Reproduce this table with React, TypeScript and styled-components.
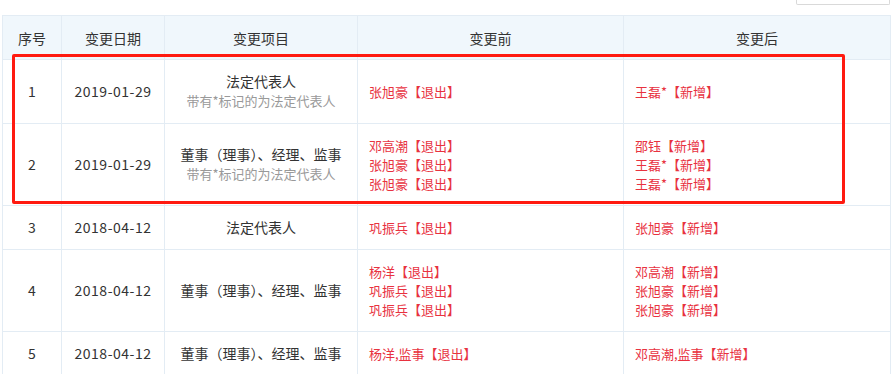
import React from "react";
import styled, { createGlobalStyle } from "styled-components";

const GlobalStyle = createGlobalStyle`
  html, body { margin: 0; padding: 0; background: #ffffff; }
  body { font-family: "Noto Sans CJK SC", "Noto Sans", sans-serif; color: #333333; }
`;

const Page = styled.div`
  width: 894px;
  height: 374px;
  overflow: hidden;
  padding-left: 2px;
  box-sizing: border-box;
`;

const Toolbar = styled.div`
  height: 15px;
  display: flex;
  justify-content: flex-end;
  align-items: flex-start;
  padding-right: 2px;
  width: 888px;
  box-sizing: border-box;
`;

const ToolButton = styled.div`
  width: 94px;
  height: 5px;
  box-sizing: border-box;
  border: 1px solid #d9d9d9;
  border-top: none;
  border-radius: 0 0 2px 2px;
  margin-right: -2px;
`;

const TableWrap = styled.div`
  position: relative;
  width: 888px;
`;

const Table = styled.table`
  width: 888px;
  border-collapse: collapse;
  table-layout: fixed;
  font-size: 14px;
`;

const HeadCell = styled.th`
  height: 43px;
  padding: 0;
  background: #f0f7fc;
  border: 1px solid #e3ecf4;
  font-weight: normal;
  color: #333;
  text-align: center;
  font-size: 14px;
  line-height: 20px;
`;

const Cell = styled.td<{ $align?: "left" | "center"; $spaced?: boolean }>`
  padding: 12px 10px 12px ${(p) => (p.$align === "left" ? "11px" : "10px")};
  border: 1px solid #e3ecf4;
  text-align: ${(p) => p.$align ?? "center"};
  vertical-align: middle;
  line-height: 19px;
  color: #333;
  white-space: nowrap;
  letter-spacing: ${(p) => (p.$spaced ? "0.5px" : "normal")};
`;

const Note = styled.div`
  font-size: 13px;
  color: #999999;
  line-height: 20px;
`;

const Change = styled.div`
  font-size: 13px;
  color: #e8323f;
  line-height: 19px;
`;

const Highlight = styled.div`
  position: absolute;
  left: 10px;
  top: 39px;
  width: 833px;
  height: 150px;
  border: 3px solid #ff1a10;
  border-radius: 2px;
  box-sizing: border-box;
  pointer-events: none;
`;

type Row = {
  no: number;
  date: string;
  item: string;
  note?: boolean;
  before: string[];
  after: string[];
};

const rows: Row[] = [
  { no: 1, date: "2019-01-29", item: "法定代表人", note: true, before: ["张旭豪【退出】"], after: ["王磊*【新增】"] },
  {
    no: 2,
    date: "2019-01-29",
    item: "董事（理事）、经理、监事",
    note: true,
    before: ["邓高潮【退出】", "张旭豪【退出】", "张旭豪【退出】"],
    after: ["邵钰【新增】", "王磊*【新增】", "王磊*【新增】"],
  },
  { no: 3, date: "2018-04-12", item: "法定代表人", before: ["巩振兵【退出】"], after: ["张旭豪【新增】"] },
  {
    no: 4,
    date: "2018-04-12",
    item: "董事（理事）、经理、监事",
    before: ["杨洋【退出】", "巩振兵【退出】", "巩振兵【退出】"],
    after: ["邓高潮【新增】", "张旭豪【新增】", "张旭豪【新增】"],
  },
  { no: 5, date: "2018-04-12", item: "董事（理事）、经理、监事", before: ["杨洋,监事【退出】"], after: ["邓高潮,监事【新增】"] },
];

export default function App() {
  return (
    <Page>
      <GlobalStyle />
      <Toolbar>
        <ToolButton />
      </Toolbar>
      <TableWrap>
        <Table>
          <colgroup>
            <col style={{ width: 59 }} />
            <col style={{ width: 103 }} />
            <col style={{ width: 193 }} />
            <col style={{ width: 266 }} />
            <col style={{ width: 267 }} />
          </colgroup>
          <thead>
            <tr>
              <HeadCell>序号</HeadCell>
              <HeadCell>变更日期</HeadCell>
              <HeadCell>变更项目</HeadCell>
              <HeadCell>变更前</HeadCell>
              <HeadCell>变更后</HeadCell>
            </tr>
          </thead>
          <tbody>
            {rows.map((r) => (
              <tr key={r.no}>
                <Cell>{r.no}</Cell>
                <Cell $spaced>{r.date}</Cell>
                <Cell>
                  <div>{r.item}</div>
                  {r.note && <Note>带有*标记的为法定代表人</Note>}
                </Cell>
                <Cell $align="left">
                  {r.before.map((b, i) => (
                    <Change key={i}>{b}</Change>
                  ))}
                </Cell>
                <Cell $align="left">
                  {r.after.map((a, i) => (
                    <Change key={i}>{a}</Change>
                  ))}
                </Cell>
              </tr>
            ))}
          </tbody>
        </Table>
        <Highlight />
      </TableWrap>
    </Page>
  );
}
